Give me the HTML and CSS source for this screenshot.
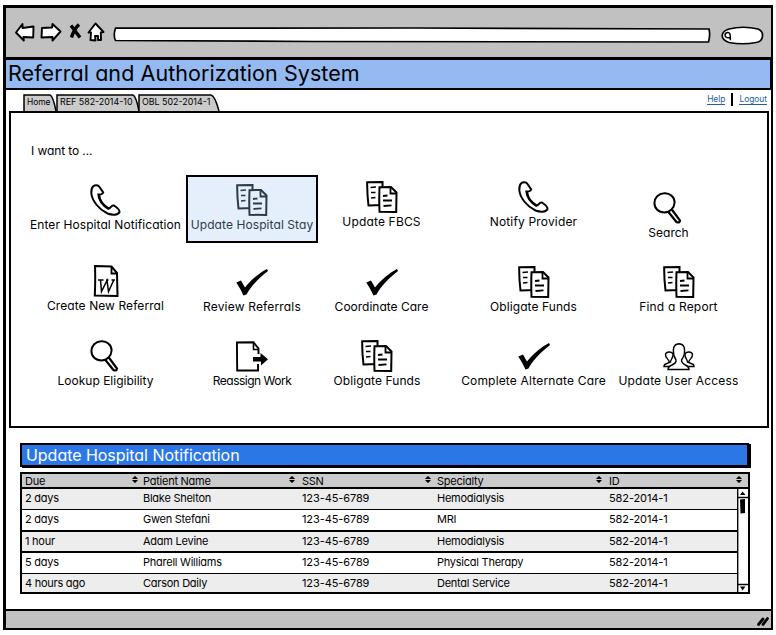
FILE: index.html
```html
<!DOCTYPE html>
<html lang="en">
<head>
<meta charset="utf-8">
<title>Referral and Authorization System</title>
<link rel="stylesheet" href="styles.css">
</head>
<body>
<svg class="defs" aria-hidden="true">
  <symbol id="phone" viewBox="0 0 32 32">
    <path d="M3 2.500C5 .8 8 .8 9.500 3L13.200 8.500C12.500 11 9.500 9.800 9 11.500C9.500 16.500 13.500 21.500 18 24.500C20.500 25.500 21 20.500 24 21.500C27 23.500 30 26 29.500 28C28 31.500 22 31.200 17.500 29.500C9 25.500 2 17 1.300 9C1.200 6 1.500 4 3 2.500Z" fill="#fff" stroke="#000" stroke-width="2"/>
    <path d="M8.500 9.500Q9 19 19 25" fill="none" stroke="#000" stroke-width="2.600"/>
  </symbol>
  <symbol id="docs" viewBox="0 0 32 32">
    <path d="M1.200 1.200L16.500 1V24L2.500 24.500Q1 12 1.200 1.200Z" fill="inherit" stroke="currentColor" stroke-width="2"/>
    <path d="M4.500 6.500L10 6M5 11.500H9.500M5 17L9.500 16.500" fill="none" stroke="currentColor" stroke-width="1.700"/>
    <path d="M13.500 6.200L25 6L30.500 11.500L30.200 31L13.500 30.800Q13 18 13.500 6.200Z" fill="inherit" stroke="currentColor" stroke-width="2"/>
    <path d="M24.500 6.500V12.500H30.500M17 15L21.500 14.500M17 19.500H26M17.500 25L25.500 24.300" fill="none" stroke="currentColor" stroke-width="1.800"/>
  </symbol>
  <symbol id="lens" viewBox="0 0 32 32">
    <path d="M15 19.500L23.500 30Q26.500 31.500 27 28.500L18.800 17.500" fill="#fff" stroke="#000" stroke-width="2.200"/>
    <path d="M11 1.300C17 .8 21.700 5 21.600 10.500C21.300 16 17 20.300 11.500 20.500C5.500 20.500 1.500 16.500 1.400 11C1.500 5.500 5.500 1.600 11 1.300Z" fill="#fff" stroke="#000" stroke-width="2"/>
  </symbol>
  <symbol id="word" viewBox="0 0 32 32">
    <path d="M5 1L21.500 1.500L27 8L27.500 31L4.800 30.500Q5.500 15 5 1Z" fill="#fff" stroke="#000" stroke-width="2"/>
    <path d="M21.500 1.500V8.500H27" fill="none" stroke="#000" stroke-width="1.800"/>
    <path d="M8 15H13.500M10.500 15L11.500 26.500L17 15.500L18.500 26.500L23.800 15M16 15H18.500M21.500 15H25" fill="none" stroke="#000" stroke-width="1.500"/>
  </symbol>
  <symbol id="check" viewBox="0 0 32 32">
    <path d="M.3 16.500L5 14.500L9 21.500C15 14 23 7 31 3L32 5C23 12 15 20 10.500 28.500L7.500 29.500Q4 22 .3 16.500Z"/>
  </symbol>
  <symbol id="move" viewBox="0 0 32 32">
    <path d="M22 24V30.500H1.200L.9 2.500L17.500 2.300L22.500 8.500V14" fill="#fff" stroke="#000" stroke-width="1.900"/>
    <path d="M17.500 2.500V9.500H22.500" fill="none" stroke="#000" stroke-width="1.600"/>
    <path d="M17 17H24.500V13L32 19.300L25 25.500V21.500H17Z"/>
  </symbol>
  <symbol id="users" viewBox="0 0 32 32">
    <g fill="#fff" stroke="#000" stroke-width="1.400">
      <path d="M6 22C6.500 19.500 2 18 2.500 14.500C3 11.500 9 11 10 14C10.500 18 7.500 19 7.500 22L1.500 24.500L1 26.500H9"/>
      <path d="M26 22C25.500 19.500 30 18 29.500 14.500C29 11.500 23 11 22 14C21.500 18 24.500 19 24.500 22L30.500 24.500L31 26.500H23"/>
      <path d="M5 29.500Q5 26.500 9 25Q13.500 23 13 20C9.500 14.500 8.500 4 16 3.800C23.500 4 22.500 14.500 18.500 20Q18.500 23 22.500 25Q26 26.500 26 29.500Z"/>
    </g>
  </symbol>
  <symbol id="sort" viewBox="0 0 6 7"><path d="M0 3L2.500 .2H3.500L6 3ZM0 4H6L3.500 6.800H2.500Z"/></symbol>
</svg>

<div class="window">
  <header class="chrome">
    <svg class="nav" width="92" height="22" viewBox="0 0 92 22">
      <g fill="#fff" stroke="#000" stroke-width="1.900" stroke-linejoin="round">
        <path d="M2 10.500L8.500 2V6L19.500 4.500L19.200 15.500L9.500 15L9.800 18.500Z"/>
        <path d="M28 6L38 5.500L38.500 2L46.500 9.500L38.500 18.500V15L27.500 15.500Z"/>
        <path d="M74.500 10.500L81.500 1.500L89.500 10L86.800 10.500L87 18H84V14H81L81.500 18.500L76.500 18L77 10.500Z"/>
      </g>
      <path d="M57 3.500L66 15.500M65 2.500Q60 7 57.500 15.500" fill="none" stroke="#000" stroke-width="3.400"/>
    </svg>
    <svg class="address" width="598" height="16" viewBox="0 0 598 16"><path d="M2.500 1.200L300 1L596 2Q597.500 8 595.500 15L200 14.500L2.500 13.500Q0 8 2.500 1.200Z" fill="#fff" stroke="#000" stroke-width="1.700"/></svg>
    <svg class="find" width="43" height="19" viewBox="0 0 43 19">
      <path d="M8 3Q22 -.5 37 3Q42 5 41.500 10Q41 16 35 16.500Q22 19 8 16.500Q1 14 1.200 9.500Q1.500 5 8 3Z" fill="#fff" stroke="#000" stroke-width="1.700"/>
      <path d="M9.300 11.500Q4 12.500 4 9Q4.500 6.500 7 6.600Q9.500 6.800 9.300 11.500V14.300" fill="none" stroke="#000" stroke-width="1.500"/>
    </svg>
  </header>
  <h1 class="title">Referral and Authorization System</h1>

  <div class="bar">
    <nav class="tabs">
      <a class="tab home"><svg width="34" height="17"><path d="M1 17V1H27Q30 2 33 17"/></svg><span>Home</span></a>
      <a class="tab ref"><svg width="84" height="17"><path d="M1 17V1H77Q80 2 83 17"/></svg><span>REF 582-2014-10</span></a>
      <a class="tab obl"><svg width="82" height="17"><path d="M1 17V1H73Q77 2 81 17"/></svg><span>OBL 502-2014-1</span></a>
    </nav>
    <div class="links"><a class="help">Help</a><i></i><a class="logout">Logout</a></div>
  </div>

  <main class="panel">
    <p class="lead">I want to ...</p>
    <div class="grid r1">
      <div class="item low"><svg><use href="#phone"/></svg><span class="t1">Enter Hospital Notification</span></div>
      <div class="item low selected"><svg><use href="#docs"/></svg><span class="t1">Update Hospital Stay</span></div>
      <div class="item"><svg><use href="#docs"/></svg><span class="t2">Update FBCS</span></div>
      <div class="item"><svg><use href="#phone"/></svg><span class="t2">Notify Provider</span></div>
      <div class="item search"><svg><use href="#lens"/></svg><span>Search</span></div>
    </div>
    <div class="grid r2">
      <div class="item up"><svg><use href="#word"/></svg><span class="t1">Create New Referral</span></div>
      <div class="item"><svg><use href="#check"/></svg><span class="t2">Review Referrals</span></div>
      <div class="item"><svg><use href="#check"/></svg><span>Coordinate Care</span></div>
      <div class="item"><svg><use href="#docs"/></svg><span class="t1">Obligate Funds</span></div>
      <div class="item"><svg><use href="#docs"/></svg><span class="t2">Find a Report</span></div>
    </div>
    <div class="grid r3">
      <div class="item"><svg><use href="#lens"/></svg><span>Lookup Eligibility</span></div>
      <div class="item"><svg><use href="#move"/></svg><span class="tight">Reassign Work</span></div>
      <div class="item left"><svg><use href="#docs"/></svg><span class="t1">Obligate Funds</span></div>
      <div class="item"><svg><use href="#check"/></svg><span class="t2">Complete Alternate Care</span></div>
      <div class="item"><svg><use href="#users"/></svg><span class="t2">Update User Access</span></div>
    </div>
  </main>

  <section class="queue">
    <h2>Update Hospital Notification</h2>
    <div class="table">
      <div class="row head">
        <span>Due<svg><use href="#sort"/></svg></span><span>Patient Name<svg><use href="#sort"/></svg></span><span>SSN<svg><use href="#sort"/></svg></span><span>Specialty<svg><use href="#sort"/></svg></span><span>ID<svg><use href="#sort"/></svg></span>
      </div>
      <div class="body">
        <div class="rows">
          <div class="row"><span>2 days</span><span>Blake Shelton</span><span class="n">123-45-6789</span><span>Hemodialysis</span><span class="n">582-2014-1</span></div>
          <div class="row"><span>2 days</span><span>Gwen Stefani</span><span class="n">123-45-6789</span><span>MRI</span><span class="n">582-2014-1</span></div>
          <div class="row"><span>1 hour</span><span>Adam Levine</span><span class="n">123-45-6789</span><span>Hemodialysis</span><span class="n">582-2014-1</span></div>
          <div class="row"><span>5 days</span><span>Pharell Williams</span><span class="n">123-45-6789</span><span>Physical Therapy</span><span class="n">582-2014-1</span></div>
          <div class="row"><span>4 hours ago</span><span>Carson Daily</span><span class="n">123-45-6789</span><span>Dental Service</span><span class="n">582-2014-1</span></div>
        </div>
        <svg class="scroll" width="11" height="103" viewBox="0 0 11 103">
          <path d="M.7 0V103M0 8.500H11M0 95.500H11" stroke="#000" stroke-width="1.400"/>
          <path d="M3 6L5.500 2.500L8.500 6ZM3 97.500H8.500L5.500 101.500ZM3 10.500L8 10V24L3.500 24.500Z"/>
        </svg>
      </div>
    </div>
  </section>

  <footer class="status">
    <svg width="12" height="11" viewBox="0 0 12 11"><path d="M1.500 8.500L6 3M6 8.500L10.500 2.500" stroke="#000" stroke-width="2.800" stroke-linecap="round"/></svg>
  </footer>
</div>
</body>
</html>
```

FILE: styles.css
```css
* { box-sizing: border-box; }
body {
  margin: 0;
  background: #fff;
  color: #000;
  font: 12px/16px Inter, "Liberation Sans", sans-serif;
  font-feature-settings: "cv11";
}
h1, h2, p { margin: 0; font-weight: 400; }
svg { display: block; flex: none; }
.defs { position: absolute; width: 0; height: 0; }

.window {
  display: flex;
  flex-direction: column;
  width: 770px;
  height: 625px;
  margin: 5px 0 0 3px;
  border: solid #000;
  border-width: 3px 2px 2px 3px;
}

.chrome {
  display: flex;
  align-items: flex-start;
  height: 49px;
  padding: 14px 0 0 8px;
  background: #c1c1c1;
}
.address { margin: 5px 0 0 7px; }
.find { margin: 4px 0 0 10px; }

.title {
  height: 33px;
  padding-left: 2px;
  border: solid #000;
  border-width: 3px 1px 2px 0;
  background: #94baf1;
  font-size: 21.5px;
  letter-spacing: .07px;
  line-height: 27px;
  white-space: nowrap;
}

.bar {
  display: flex;
  justify-content: space-between;
  height: 21px;
  padding: 4px 4px 0 17px;
}
.tabs { display: flex; font-size: 8.9px; }
.tab { position: relative; height: 17px; white-space: nowrap; }
.tab svg { position: absolute; inset: 0; overflow: visible; fill: #cbcbcb; stroke: #000; stroke-width: 1.5; }
.tab span { position: relative; display: block; padding-left: 3px; line-height: 16px; }
.home { width: 33px; font-size: 8.4px; z-index: 1; }
.home span { padding-left: 4px; }
.ref { width: 82px; }
.ref span, .obl span { padding-left: 4px; }
.obl { width: 82px; z-index: 0; }
.links {
  display: flex;
  gap: 6px;
  color: #265c9e;
  font-size: 8.4px;
  line-height: 12px;
}
.links a { height: 11px; border-bottom: 1px solid #265c9e; line-height: 11px; }
.links i { width: 2px; height: 13px; background: #000; margin-top: -1px; }

.panel {
  width: 760px;
  height: 317px;
  margin-left: 3px;
  padding-top: 30px;
  border: 2px solid #000;
}
.lead { padding-left: 20px; line-height: 16px; letter-spacing: -.1px; }
.grid {
  display: grid;
  grid-template-columns: 161px 132px 127px 177px 113px;
  margin-left: 14px;
}
.r1 { height: 68px; margin-top: 16px; }
.r2 { height: 52px; margin-top: 23px; }
.r3 { height: 52px; margin-top: 22px; }
.item {
  display: flex;
  flex-direction: column;
  align-items: center;
  white-space: nowrap;
}
.item svg { width: 32px; height: 32px; fill: #fff; }
.item span { padding-top: .5px; }
.item svg:has(use[href="#check"]), .item svg:has(use[href="#move"]) { fill: #000; }
.t1 { letter-spacing: .08px; }
.t2 { letter-spacing: .17px; }
.tight { letter-spacing: -.5px; }
.r1 .item { padding-top: 6px; }
.r1 .low { padding-top: 9px; }
.r1 .search { padding: 17px 20px 0 0; }
.r2 .up { margin-top: -1px; }
.left { padding-right: 9px; }
.r1 .selected {
  padding-top: 7px;
  border: 2px solid #000;
  background: #e5effc;
  color: #2e3a48;
}
.item.selected svg { fill: #e5effc; }

.queue { padding: 15px 0 0 14px; }
.queue h2 {
  width: 729px;
  height: 24px;
  padding-left: 4px;
  border: 2px solid #000;
  box-shadow: 2px 1px 0 #000;
  background: #2b77e5;
  color: #fff;
  font-size: 16px;
  line-height: 20px;
  letter-spacing: -.04px;
}
.table {
  width: 730px;
  height: 122px;
  margin-top: 5px;
  border: 2px solid #000;
  font-size: 11px;
  letter-spacing: -.25px;
}
.row {
  display: grid;
  grid-template-columns: 118px 159px 135px 172px 1fr;
  height: 21.3px;
  border-bottom: 1px solid #000;
  line-height: 18px;
}
.row span { padding-left: 3px; }
.n { letter-spacing: -.1px; }
.row:nth-child(odd) { background: #ededed; }
.row:nth-child(2), .row:nth-child(3) { border-bottom-width: 2px; }
.row:last-child { border-bottom: 0; height: 18px; }
.row.head {
  height: 15px;
  border-bottom: 2px solid #000;
  background: #cbcbcb;
  line-height: 14px;
}
.head span { display: flex; justify-content: space-between; padding-right: 2px; }
.head span:nth-child(2) { padding-right: 4px; }
.head span:nth-child(3) { padding-right: 3px; }
.head span:nth-child(4) { padding-right: 4px; }
.head span:last-child { padding-right: 6px; }
.head svg { width: 6px; height: 7px; margin-top: 2px; }
.body { display: flex; height: 103px; }
.rows { flex: 1; }

.status {
  display: flex;
  justify-content: flex-end;
  height: 19px;
  margin-top: auto;
  padding: 5px 2px 0 0;
  border-top: 2px solid #000;
  background: #c1c1c1;
}
```
